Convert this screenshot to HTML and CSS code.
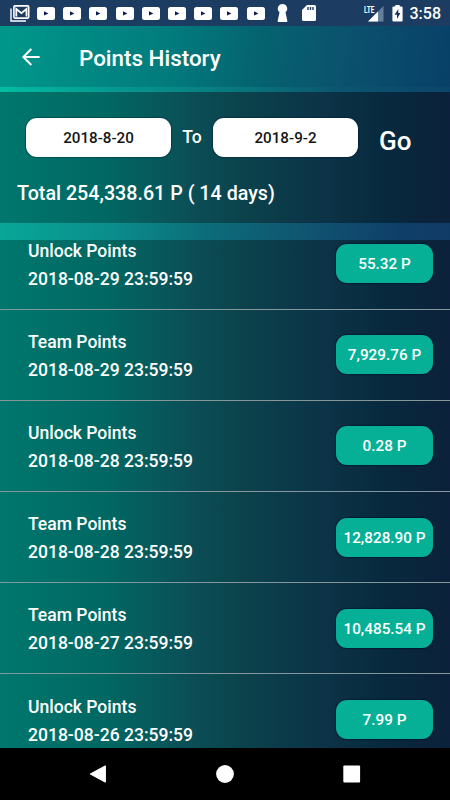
FILE: index.html
```html
<!DOCTYPE html>
<html lang="en">

<head>
    <meta charset="UTF-8">
    <meta name="viewport" content="width=device-width, initial-scale=1.0">
    <title>Points History</title>
    <link rel="stylesheet" href="styles.css">
</head>

<body>
    <svg class="symbols" width="0" height="0">
        <symbol id="video" viewBox="0 0 18 13">
            <rect width="18" height="13" rx="2.5" fill="#fff"/>
            <path d="M7 4.2v4.4L11.4 6.4z" fill="#0c1a50"/>
        </symbol>
    </svg>

    <div class="status-bar">
        <div class="notifications">
            <svg class="mail" width="20" height="17" viewBox="0 0 20 17">
                <path d="M1 3.5V16H16" fill="none" stroke="#fff" stroke-width="1.4"/>
                <rect x="3.9" y=".9" width="14.8" height="12.2" rx="1" fill="none" stroke="#fff" stroke-width="1.6"/>
                <path d="M6.3 11.5V4L11.4 8.2 16.5 4V11.5" fill="none" stroke="#fff" stroke-width="1.8"/>
            </svg>
            <svg class="video"><use href="#video"/></svg>
            <svg class="video"><use href="#video"/></svg>
            <svg class="video"><use href="#video"/></svg>
            <svg class="video"><use href="#video"/></svg>
            <svg class="video"><use href="#video"/></svg>
            <svg class="video"><use href="#video"/></svg>
            <svg class="video"><use href="#video"/></svg>
            <svg class="video"><use href="#video"/></svg>
            <svg class="video"><use href="#video"/></svg>
            <svg class="keyhole" width="11" height="18" viewBox="0 0 11 18">
                <path d="M5.5 0a4.7 4.7 0 0 0-3 8.3L.6 17.2Q.6 18 1.4 18H9.6Q10.4 18 10.4 17.2L8.5 8.3A4.7 4.7 0 0 0 5.5 0z" fill="#fff"/>
            </svg>
            <svg class="sd-card" width="14" height="16" viewBox="0 0 14 16">
                <path d="M5 0H12.5Q14 0 14 1.5V14.5Q14 16 12.5 16H1.5Q0 16 0 14.5V5z" fill="#fff"/>
                <path d="M6 2v3M8.5 2v3M11 2v3" stroke="#1c3c61" stroke-width="1.4"/>
            </svg>
        </div>
        <div class="system">
            <svg class="signal" width="20" height="17" viewBox="0 0 20 17">
                <path d="M19.5 1V16.5H4z" fill="#65809a"/>
                <path d="M14 6.5V16.5H4z" fill="#fff"/>
                <text x="0" y="7.5" textLength="10.5" lengthAdjust="spacingAndGlyphs">LTE</text>
            </svg>
            <svg class="battery" width="11" height="17" viewBox="0 0 11 17">
                <path d="M3.3 0H7.7V1.6H9.5Q10.6 1.6 10.6 2.7V15.5Q10.6 16.6 9.5 16.6H1.5Q.4 16.6 .4 15.5V2.7Q.4 1.6 1.5 1.6H3.3z" fill="#fff"/>
                <path d="M6.3 4L2.6 9.8H5V14L8.4 8H6.3z" fill="#14305a"/>
            </svg>
            <span class="clock">3:58</span>
        </div>
    </div>

    <div class="toolbar">
        <svg class="back" width="18" height="18" viewBox="0 0 18 18">
            <path d="M9.3 1L1.4 9l7.9 8M1.4 9H17.6" fill="none" stroke="#fff" stroke-width="2"/>
        </svg>
        <h1>Points History</h1>
    </div>

    <div class="content">
        <div class="filter">
            <div class="dates">
                <div class="date">2018-8-20</div>
                <span class="to">To</span>
                <div class="date">2018-9-2</div>
                <span class="go">Go</span>
            </div>
            <p class="total">Total 254,338.61 P ( 14 days)</p>
        </div>
        <div class="divider"></div>

        <div class="list">
            <div class="row">
                <div class="info">
                    <p>Unlock Points</p>
                    <p>2018-08-29 23:59:59</p>
                </div>
                <div class="points">55.32 P</div>
            </div>
            <div class="row">
                <div class="info">
                    <p>Team Points</p>
                    <p>2018-08-29 23:59:59</p>
                </div>
                <div class="points">7,929.76 P</div>
            </div>
            <div class="row">
                <div class="info">
                    <p>Unlock Points</p>
                    <p>2018-08-28 23:59:59</p>
                </div>
                <div class="points">0.28 P</div>
            </div>
            <div class="row">
                <div class="info">
                    <p>Team Points</p>
                    <p>2018-08-28 23:59:59</p>
                </div>
                <div class="points">12,828.90 P</div>
            </div>
            <div class="row">
                <div class="info">
                    <p>Team Points</p>
                    <p>2018-08-27 23:59:59</p>
                </div>
                <div class="points">10,485.54 P</div>
            </div>
            <div class="row">
                <div class="info">
                    <p>Unlock Points</p>
                    <p>2018-08-26 23:59:59</p>
                </div>
                <div class="points">7.99 P</div>
            </div>
        </div>
    </div>

    <div class="nav-bar">
        <svg width="18" height="18" viewBox="0 0 18 18">
            <path d="M16.4 .8V17.2L1.2 9z" fill="#fff" stroke="#fff" stroke-width="1" stroke-linejoin="round"/>
        </svg>
        <svg width="18" height="18" viewBox="0 0 18 18">
            <circle cx="9" cy="9" r="8.9" fill="#fff"/>
        </svg>
        <svg width="18" height="18" viewBox="0 0 18 18">
            <rect x=".3" y=".6" width="16.8" height="16.8" rx="1" fill="#fff"/>
        </svg>
    </div>
</body>

</html>
```
FILE: styles.css
```css
* {
    box-sizing: border-box;
}

body {
    margin: 0;
    height: 800px;
    overflow: hidden;
    display: flex;
    flex-direction: column;
    font-family: Roboto, "Liberation Sans", sans-serif;
    font-weight: 500;
    color: #fff;
    background-color: #000;
}

h1,
p {
    margin: 0;
    font-weight: 500;
}

svg {
    display: block;
    flex: none;
}

.symbols {
    position: absolute;
}

.status-bar {
    flex: none;
    height: 26px;
    padding: 0 9px 0 10px;
    display: flex;
    justify-content: space-between;
    align-items: center;
    background-color: #1c3c61;
}

.notifications,
.system {
    display: flex;
    align-items: center;
}

.mail {
    margin-right: 7px;
}

.video {
    width: 18px;
    height: 13px;
    margin-right: 8.2px;
}

.keyhole {
    margin-left: 4px;
}

.sd-card {
    margin-left: 14px;
}

.signal text {
    font-size: 9px;
    font-weight: 700;
    fill: #fff;
}

.battery {
    margin: 0 7px 0 8px;
}

.clock {
    font-size: 16px;
    line-height: 26px;
    padding-top: 2px;
}

.toolbar {
    flex: none;
    height: 61px;
    padding-left: 22px;
    display: flex;
    align-items: center;
    background: linear-gradient(97deg, #00988b 0%, #027b7d 38%, #05626f 58%, #0b536e 75%, #084068 100%);
}

.toolbar h1 {
    margin-left: 39px;
    font-size: 22.4px;
    line-height: 30px;
    padding-top: 2px;
}

.content {
    flex: none;
    height: 661px;
    display: flex;
    flex-direction: column;
    border-top: 5px solid transparent;
    background:
        linear-gradient(90deg, #00776d 0%, #016762 24%, #0b4f56 42%, #0b424c 54%, #0c3347 72%, #07293d 86%, #0c213b 100%) padding-box,
        linear-gradient(90deg, #02bda1 0%, #059890 26%, #087b7e 50%, #0c5670 75%, #0b446a 100%) border-box;
}

.filter {
    flex: none;
    height: 131px;
    padding: 26px 0 0 17px;
}

.dates {
    display: flex;
    padding-left: 9px;
}

.date {
    width: 145px;
    height: 39px;
    border-radius: 11px;
    background-color: #fff;
    color: #151515;
    font-size: 15.2px;
    line-height: 40px;
    text-align: center;
    box-shadow: 0 0 1px 1px rgba(0, 10, 35, 0.3);
}

.to {
    width: 42px;
    font-size: 17.6px;
    line-height: 39px;
    text-align: center;
}

.go {
    margin-left: 21px;
    font-size: 26px;
    line-height: 46px;
}

.total {
    margin-top: 17px;
    font-size: 19.7px;
    line-height: 26px;
}

.divider {
    flex: none;
    height: 17px;
    background: linear-gradient(96deg, #08a798 0%, #0a8d8c 25%, #0c6c79 46%, #105270 70%, #0f4069 88%, #103b66 100%);
}

.list {
    flex: 1;
    overflow: hidden;
}

.row {
    height: 91.2px;
    padding: 0 17px 0 28px;
    display: flex;
    justify-content: space-between;
    align-items: center;
    border-bottom: 1px solid #85979a;
}

/* list is scrolled a little under the divider */
.row:first-child {
    margin-top: -21.5px;
}

.info {
    padding-top: 2px;
}

.info p {
    font-size: 17.55px;
    line-height: 28px;
}

.points {
    width: 97px;
    height: 39px;
    border-radius: 11px;
    background-color: #05b096;
    font-size: 15.3px;
    line-height: 40px;
    text-align: center;
    box-shadow: 0 0 1px 1px rgba(3, 15, 48, 0.55);
}

.nav-bar {
    flex: 1;
    padding: 0 89px 0 89px;
    display: flex;
    justify-content: space-between;
    align-items: center;
    background-color: #000;
}
```
